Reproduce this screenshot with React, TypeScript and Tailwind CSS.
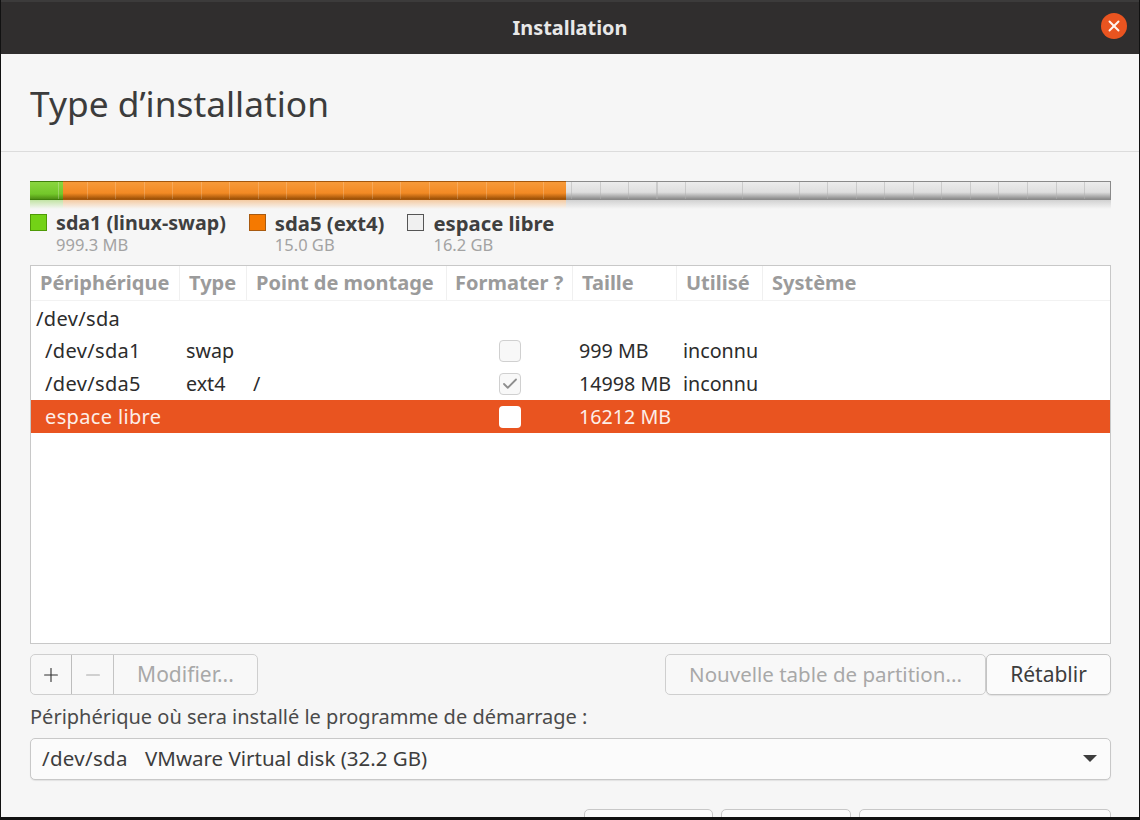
import React from "react";
import {Check, Minus, Plus, X} from "lucide-react";

const columns = [
  {title: "Périphérique", pad: "pl-[9px]"},
  {title: "Type", pad: "pl-[9px]"},
  {title: "Point de montage", pad: "pl-[9px]"},
  {title: "Formater ?", pad: "pl-[8px]"},
  {title: "Taille", pad: "pl-[9px]"},
  {title: "Utilisé", pad: "pl-[9px]"},
  {title: "Système", pad: "pl-[9px]"},
];

const legend = [
  {name: "sda1 (linux-swap)", size: "999.3 MB", box: "bg-[#73d216] border-[#4e9a06]", label: "text-[19.7px]"},
  {name: "sda5 (ext4)", size: "15.0 GB", box: "bg-[#f57900] border-[#a85a10]", label: "text-[20.3px]"},
  {name: "espace libre", size: "16.2 GB", box: "bg-[#f0f0f0] border-[#555555]", label: "text-[20.3px]"},
];

const gridCols = "grid grid-cols-[149px_67px_200px_126px_104px_86px_1fr]";

const Checkbox: React.FC<{checked?: boolean; selected?: boolean}> = ({checked, selected}) => (
  <div
    className={
      selected
        ? "flex h-[22px] w-[22px] items-center justify-center rounded-[4px] bg-white"
        : "flex h-[22px] w-[22px] items-center justify-center rounded-[4px] border border-[#d0d0d0] bg-[#f8f8f8]"
    }
  >
    {checked && <Check size={18} strokeWidth={2.4} className="text-[#8e8e8e]" />}
  </div>
);

const Row: React.FC<{
  device: string;
  type?: string;
  mount?: string;
  size?: string;
  used?: string;
  format?: "empty" | "checked";
  selected?: boolean;
  rowClass: string;
}> = ({device, type, mount, size, used, format, selected, rowClass}) => (
  <div className={`${gridCols} ${rowClass} items-center text-[19.7px] ${selected ? "bg-[#e95420] text-[#fdeee8]" : "text-[#2c2c2c]"}`}>
    <div className="pl-[14px] text-[20px] tracking-[0.35px]">{device}</div>
    <div className="pl-[6px]">{type}</div>
    <div className="pl-[6px]">{mount}</div>
    <div className="flex justify-center">
      {format && <Checkbox checked={format === "checked"} selected={selected} />}
    </div>
    <div className="pl-[6px] whitespace-nowrap">{size}</div>
    <div className="pl-[6px]">{used}</div>
    <div />
  </div>
);

const App: React.FC = () => {
  return (
    <div className="h-[820px] w-[1140px] overflow-hidden bg-[#111111] pl-px pr-px pb-[3px] font-['Noto_Sans',sans-serif] text-[21px] text-[#3d3d3d]">
      <div className="flex h-full flex-col overflow-hidden bg-[#f6f6f6]">
        <header className="relative flex h-[54px] shrink-0 items-center justify-center border-t-2 border-[#3c3b3b] bg-[#302e2e]">
          <span className="text-[19.9px] font-bold text-[#e8e8e8]">Installation</span>
          <div className="absolute right-[12px] top-[11px] flex h-[26px] w-[26px] items-center justify-center rounded-full bg-[#e95420]">
            <X size={18} strokeWidth={2.6} className="text-[#fff3ee]" />
          </div>
        </header>

        <div className="flex h-[98px] shrink-0 items-center border-b border-[#dcdcdc] pl-[29px] pt-[2px]">
          <h1 className="text-[35.3px] font-normal text-[#3c3c3c]">Type d’installation</h1>
        </div>

        <div className="flex flex-col px-[29px] pt-[29px]">
          {/* partition bar, ticks keep a 28.5px pitch across all three segments */}
          <div className="flex h-[19px] w-[1081px]">
            <div className="h-full w-[33px] border-y border-[#3f7f0c] bg-[linear-gradient(90deg,transparent_28px,#ffffff40_28px,#ffffff40_29px,transparent_29px),linear-gradient(#8ad63f,#73c72a_70%,#4f8f14)]" />
            <div className="h-full w-[503px] border-y border-[#a2560c] bg-[repeating-linear-gradient(90deg,transparent_0,transparent_24px,#ffffff30_24px,#ffffff30_25px,transparent_25px,transparent_28.5px),linear-gradient(#f79a3a,#f28a24_65%,#9c5006)]" />
            <div className="h-full flex-1 border-y border-r border-[#8a8a8a] bg-[repeating-linear-gradient(90deg,transparent_0,transparent_5px,#b0b0b080_5px,#b0b0b080_6px,transparent_6px,transparent_28.5px),linear-gradient(#ececec,#dedede_60%,#8c8c8c)]" />
          </div>
          <div className="flex h-[9px] w-[1081px]">
            <div className="h-full w-[33px] bg-[linear-gradient(#73c72a66,transparent)]" />
            <div className="h-full w-[503px] bg-[linear-gradient(#f28a2466,transparent)]" />
            <div className="h-full flex-1 bg-[linear-gradient(#9a9a9a66,transparent)]" />
          </div>

          {/* legend */}
          <div className="mt-[4px] flex h-[50px] gap-[23px]">
            {legend.map(item => (
              <div key={item.name} className="flex gap-[9px]">
                <div className={`mt-[1px] h-[17px] w-[17px] border ${item.box}`} />
                <div className="flex flex-col">
                  <span className={`leading-[20px] font-bold text-[#3f3f3f] ${item.label}`}>{item.name}</span>
                  <span className="mt-[2px] text-[16.5px] leading-[20px] text-[#a3a3a3]">{item.size}</span>
                </div>
              </div>
            ))}
          </div>

          {/* partition table */}
          <div className="mt-[2px] h-[379px] w-[1081px] border border-[#c8c8c8] bg-white">
            <div className={`${gridCols} h-[35px] border-b border-[#f2f2f2] text-[20px] text-[#9b9b9b]`}>
              {columns.map((col, i) => (
                <div
                  key={col.title}
                  className={`flex items-center whitespace-nowrap font-bold ${col.pad} ${i < columns.length - 1 ? "border-r border-[#f0f0f0]" : ""}`}
                >
                  {col.title}
                </div>
              ))}
            </div>
            <div className="mt-[1px] flex flex-col">
              <div className={`${gridCols} h-[33px] items-center text-[#2c2c2c]`}>
                <div className="pl-[5px] text-[20px] tracking-[0.35px]">/dev/sda</div>
              </div>
              <Row rowClass="h-[32px]" device="/dev/sda1" type="swap" size="999 MB" used="inconnu" format="empty" />
              <Row rowClass="h-[33px]" device="/dev/sda5" type="ext4" mount="/" size="14998 MB" used="inconnu" format="checked" />
              <Row rowClass="h-[33px]" device="espace libre" size="16212 MB" format="empty" selected />
            </div>
          </div>

          {/* toolbar */}
          <div className="mt-[10px] flex h-[41px] w-[1081px] justify-between">
            <div className="flex w-[228px] rounded-[5px] border border-[#cfcfcf] bg-[#f8f8f8]">
              <div className="flex w-[41px] items-center justify-center border-r border-[#bdbdbd]">
                <Plus size={22} strokeWidth={1.2} className="text-[#2e2e2e]" />
              </div>
              <div className="flex w-[42px] items-center justify-center border-r border-[#c4c4c4]">
                <Minus size={22} strokeWidth={1.2} className="text-[#a8a8a8]" />
              </div>
              <div className="flex flex-1 items-center justify-center text-[#a8a8a8]">Modifier...</div>
            </div>
            <div className="flex">
              <div className="flex w-[321px] items-center justify-center rounded-[5px] border border-[#cfcfcf] bg-[#f8f8f8] text-[20.5px] text-[#a8a8a8]">
                Nouvelle table de partition...
              </div>
              <div className="flex w-[125px] items-center justify-center rounded-[5px] border border-[#c4c4c4] bg-[#fbfbfb] text-[#3d3d3d] shadow-[0_1px_1px_#00000014]">
                Rétablir
              </div>
            </div>
          </div>

          <div className="mt-[10px] flex h-[24px] items-center text-[20px] text-[#4a4a4a]">
            Périphérique où sera installé le programme de démarrage :
          </div>

          {/* boot device select */}
          <div className="mt-[9px] flex h-[42px] w-[1081px] items-center rounded-[5px] border border-[#c8c8c8] bg-[#fbfbfb] pb-[2px] pl-[11px] pr-[13px] text-[20.5px] shadow-[0_1px_1px_#00000014]">
            <span className="w-[103px] tracking-[0.3px]">/dev/sda</span>
            <span>VMware Virtual disk (32.2 GB)</span>
            <svg className="ml-auto" width="14" height="7" viewBox="0 0 14 7">
              <path d="M0 0h14L7 7z" fill="#3d3d3d" />
            </svg>
          </div>

          {/* dialog buttons, cut off by the window edge */}
          <div className="mt-[29px] flex h-[41px] w-[1081px] justify-end gap-[8px]">
            <div className="w-[129px] rounded-[5px] border border-[#c8c8c8] bg-[#fbfbfb]" />
            <div className="w-[130px] rounded-[5px] border border-[#c8c8c8] bg-[#fbfbfb]" />
            <div className="w-[252px] rounded-[5px] border border-[#c8c8c8] bg-[#fbfbfb]" />
          </div>
        </div>
      </div>
    </div>
  );
};

export default App;
